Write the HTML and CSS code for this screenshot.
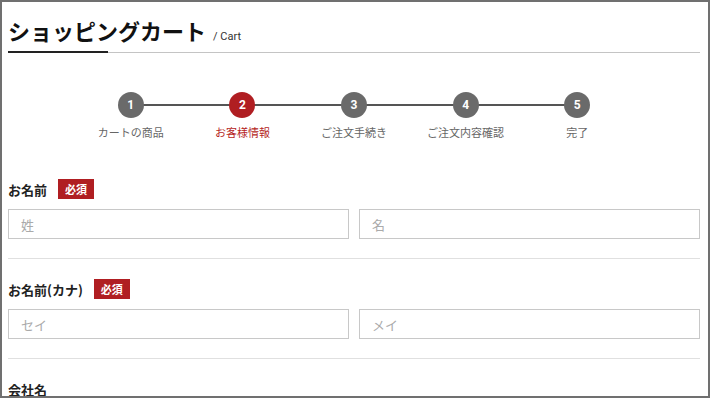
FILE: index.html
```html
<!DOCTYPE html>
<html lang="ja">
<head>
<meta charset="utf-8">
<title>ショッピングカート</title>
<link rel="stylesheet" href="styles.css">
</head>
<body>
<div class="frame">
  <header class="page-head">
    <h1 class="title">ショッピングカート<span class="sub">/ Cart</span></h1>
  </header>

  <ol class="steps">
    <li class="step"><span class="num">1</span><span class="label">カートの商品</span></li>
    <li class="step active"><span class="num">2</span><span class="label">お客様情報</span></li>
    <li class="step"><span class="num">3</span><span class="label">ご注文手続き</span></li>
    <li class="step"><span class="num">4</span><span class="label">ご注文内容確認</span></li>
    <li class="step"><span class="num">5</span><span class="label">完了</span></li>
  </ol>

  <form class="form">
    <div class="field">
      <div class="field-head"><span class="field-label">お名前</span><span class="req">必須</span></div>
      <div class="inputs">
        <input class="text" type="text" placeholder="姓">
        <input class="text" type="text" placeholder="名">
      </div>
    </div>
    <div class="field">
      <div class="field-head"><span class="field-label">お名前(カナ)</span><span class="req">必須</span></div>
      <div class="inputs">
        <input class="text" type="text" placeholder="セイ">
        <input class="text" type="text" placeholder="メイ">
      </div>
    </div>
    <div class="field">
      <div class="field-head"><span class="field-label">会社名</span></div>
      <div class="inputs">
        <input class="text" type="text">
      </div>
    </div>
  </form>
</div>
</body>
</html>
```

FILE: styles.css
```css
* { box-sizing: border-box; }
html, body { margin: 0; padding: 0; }
body {
  font-family: "Noto Sans CJK JP", "Noto Sans", sans-serif;
  color: #222;
  background: #fff;
}
.frame {
  width: 710px;
  height: 398px;
  border: 2px solid #707070;
  padding: 0 8px 0 6px;
  overflow: hidden;
}
.page-head {
  padding-top: 12px;
}
.title {
  margin: 0;
  font-size: 22px;
  font-weight: 700;
  line-height: 32px;
  color: #111;
  padding-bottom: 6px;
  height: 39px;
  background:
    linear-gradient(#222, #222) left bottom / 100px 2px no-repeat,
    linear-gradient(#c4c4c4, #c4c4c4) left bottom / 100% 1px no-repeat;
}
.sub {
  font-family: "Roboto", "Noto Sans", sans-serif;
  font-size: 11px;
  font-weight: 400;
  color: #333;
  margin-left: 7px;
}
.steps {
  list-style: none;
  margin: 39px auto 0;
  padding: 0;
  width: 558px;
  display: grid;
  grid-template-columns: repeat(5, 1fr);
  background: linear-gradient(#555, #555) center 12px / calc(100% - 111.6px) 2px no-repeat;
}
.step {
  display: flex;
  flex-direction: column;
  align-items: center;
}
.num {
  width: 26px;
  height: 26px;
  border-radius: 50%;
  background: #6a6a6a;
  color: #fff;
  font-family: "Roboto", sans-serif;
  font-weight: 700;
  font-size: 12px;
  display: flex;
  align-items: center;
  justify-content: center;
}
.label {
  margin-top: 6px;
  font-size: 11px;
  line-height: 16px;
  color: #666;
}
.step.active .num { background: #b01e22; }
.step.active .label { color: #b51e23; }

.form {
  margin-top: 39px;
}
.field {
  padding: 20px 0 19px;
  border-bottom: 1px solid #e0e0e0;
}
.field:first-child { padding-top: 0; }
.field-head {
  display: flex;
  align-items: center;
  gap: 11px;
  height: 20px;
  margin-bottom: 10px;
}
.field-label {
  font-size: 13px;
  font-weight: 700;
  color: #222;
}
.req {
  background: #b01e22;
  color: #fff;
  font-size: 11px;
  font-weight: 700;
  height: 20px;
  line-height: 20px;
  padding: 0 7px;
}
.inputs {
  display: flex;
  gap: 10px;
}
.text {
  flex: 1;
  min-width: 0;
  height: 30px;
  border: 1px solid #c8c8c8;
  border-radius: 0;
  padding: 0 12px;
  font-family: "Noto Sans CJK JP", sans-serif;
  font-size: 13px;
  color: #333;
  background: #fff;
  outline: none;
}
.text::placeholder { color: #aaa; }
```
